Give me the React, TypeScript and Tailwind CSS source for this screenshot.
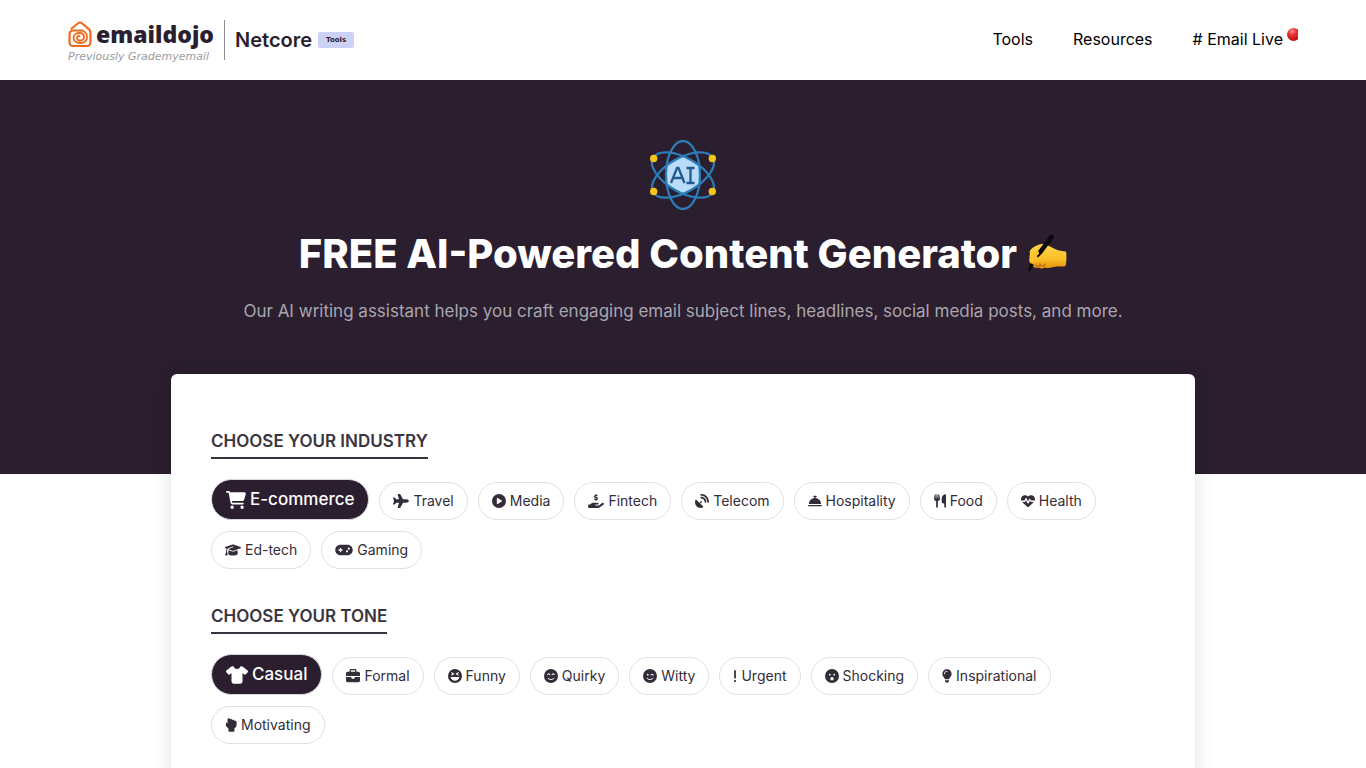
import { useState } from "react";
import type { IconType } from "react-icons";
import {
  FaBellConcierge,
  FaBriefcase,
  FaCartShopping,
  FaCirclePlay,
  FaExclamation,
  FaFaceLaughSquint,
  FaFaceSmileBeam,
  FaFaceSmileWink,
  FaFaceSurprise,
  FaGamepad,
  FaGraduationCap,
  FaHandBackFist,
  FaHandHoldingDollar,
  FaHeartPulse,
  FaLightbulb,
  FaPlane,
  FaSatelliteDish,
  FaShirt,
  FaUtensils,
} from "react-icons/fa6";

type Option = { label: string; icon: IconType; width: string; activeWidth: string };

const industries: Option[] = [
  { label: "E-commerce", icon: FaCartShopping, width: "w-4", activeWidth: "w-5" },
  { label: "Travel", icon: FaPlane, width: "w-4", activeWidth: "w-5" },
  { label: "Media", icon: FaCirclePlay, width: "w-3.5", activeWidth: "w-[18px]" },
  { label: "Fintech", icon: FaHandHoldingDollar, width: "w-4", activeWidth: "w-5" },
  { label: "Telecom", icon: FaSatelliteDish, width: "w-3.5", activeWidth: "w-[18px]" },
  { label: "Hospitality", icon: FaBellConcierge, width: "w-3.5", activeWidth: "w-[18px]" },
  { label: "Food", icon: FaUtensils, width: "w-3", activeWidth: "w-4" },
  { label: "Health", icon: FaHeartPulse, width: "w-3.5", activeWidth: "w-[18px]" },
  { label: "Ed-tech", icon: FaGraduationCap, width: "w-4", activeWidth: "w-[22px]" },
  { label: "Gaming", icon: FaGamepad, width: "w-[18px]", activeWidth: "w-[22px]" },
];

const tones: Option[] = [
  { label: "Casual", icon: FaShirt, width: "w-[18px]", activeWidth: "w-[22px]" },
  { label: "Formal", icon: FaBriefcase, width: "w-3.5", activeWidth: "w-[18px]" },
  { label: "Funny", icon: FaFaceLaughSquint, width: "w-3.5", activeWidth: "w-[18px]" },
  { label: "Quirky", icon: FaFaceSmileBeam, width: "w-3.5", activeWidth: "w-[18px]" },
  { label: "Witty", icon: FaFaceSmileWink, width: "w-3.5", activeWidth: "w-[18px]" },
  { label: "Urgent", icon: FaExclamation, width: "w-1", activeWidth: "w-1.5" },
  { label: "Shocking", icon: FaFaceSurprise, width: "w-3.5", activeWidth: "w-[18px]" },
  { label: "Inspirational", icon: FaLightbulb, width: "w-2.5", activeWidth: "w-3.5" },
  { label: "Motivating", icon: FaHandBackFist, width: "w-3", activeWidth: "w-4" },
];

function HouseMark() {
  return (
    <svg viewBox="0 0 24 27" className="h-[27px] w-6" fill="none" stroke="#f26a1b" strokeWidth="2.200" strokeLinecap="round" strokeLinejoin="round" aria-hidden="true">
      <path d="M3.500 7.500 10.500 2q1.500-1 3 0L19 6.500Q22.500 9 22.500 12V21q0 4-4 4H5.500Q1.500 25 1.500 21V13.500Q1.500 9.500 5.500 9.500h8.500" />
      <path d="M14 9.500c3.500 1 5 3.500 5 6.500 0 4-3 6-7 6s-6.500-2.500-6.500-5.500 3-4.500 6-4.500 4.500 2 4.500 4-1.500 3.500-4 3.500-3-1.300-3-2.800 1.500-2 2.700-1.500" strokeWidth="1.800" />
    </svg>
  );
}

function AtomLogo() {
  return (
    <svg viewBox="0 0 70 70" className="size-[70px]" fill="none" role="img" aria-label="AI">
      <path d="M35 16 51.500 25.500V44.500L35 54 18.500 44.500V25.500Z" fill="#b9dcfa" stroke="#8fc4ee" />
      <g stroke="#2c7cb8" strokeWidth="2.300">
        <ellipse cx="35" cy="35" rx="17" ry="34" />
        <ellipse cx="35" cy="35" rx="34.500" ry="17" transform="rotate(30 35 35)" />
        <ellipse cx="35" cy="35" rx="34.500" ry="17" transform="rotate(-30 35 35)" />
      </g>
      <path d="M23 43 29 28h1.500L36.500 43M25 38h9.500M38.500 28h8M42.500 28v15M38.500 43h8" stroke="#235a8b" strokeWidth="2.300" />
      <g fill="#f5c518">
        <circle cx="5.700" cy="18.500" r="3.700" />
        <circle cx="64.300" cy="18.500" r="3.700" />
        <circle cx="5.700" cy="51.500" r="3.700" />
        <circle cx="64.300" cy="51.500" r="3.700" />
      </g>
    </svg>
  );
}

function WritingHand() {
  return (
    <svg viewBox="0 2 40 40" className="size-10" role="img" aria-label="writing hand">
      <defs>
        <linearGradient id="skin" x1="0" y1="0" x2="0" y2="1">
          <stop offset="0" stopColor="#ffd84a" />
          <stop offset="0.600" stopColor="#fcbf28" />
          <stop offset="1" stopColor="#e2920c" />
        </linearGradient>
      </defs>
      <path d="M3 22C1.500 18 6 15 10 13.500c3-1.500 7-2 10-.5l8 4c4 2 8 2 11 2.500.8 4 .5 11-.5 14.500-3.500 1-8 0-12 1-3 1-6 1.500-8.500.5-2 1.300-4.500 1.300-6 .3-3 .5-6-.3-7.500-2.800C2 30.500 2 26 3 22Z" fill="url(#skin)" />
      <path d="M8.500 33c1.500 2.200 4.500 1.500 4.500-.5 1.500 2.200 4.500 1.500 5-.5" stroke="#b96a0a" strokeWidth="1.300" fill="none" strokeLinecap="round" />
      <path d="M22.500 3.800c1.200-2.200 5.500-.8 4.300 1.800L15.500 21 11 25.500 8 22.500 11.500 18.500Z" fill="#0b0a0d" />
      <path d="M3.500 31 7 33 2.500 39.500.8 38.500Z" fill="#0b0a0d" />
      <path d="M4.500 28.500c1.500-4 3-6 5.500-7.500" stroke="#fdc42e" strokeWidth="4" fill="none" strokeLinecap="round" />
    </svg>
  );
}

function LiveDot() {
  return (
    <svg viewBox="0 0 11 14" className="h-3.5 w-[11px]" aria-hidden="true">
      <defs>
        <radialGradient id="live" cx="0.400" cy="0.250" r="0.800">
          <stop offset="0" stopColor="#ff8a86" />
          <stop offset="0.400" stopColor="#e5322f" />
          <stop offset="1" stopColor="#b80f16" />
        </radialGradient>
      </defs>
      <circle cx="6.500" cy="7.500" r="6.500" fill="url(#live)" />
    </svg>
  );
}

function Choices({ title, options }: { title: string; options: Option[] }) {
  const [selected, setSelected] = useState(options[0].label);
  return (
    <section className="mb-[35px]">
      <h2 className="inline-block border-b-2 border-[#3a3440] pb-1 text-[17px] leading-6 font-semibold text-[#3a3440]">{title}</h2>
      <div className="mt-5 flex flex-wrap items-end gap-x-2.5 gap-y-[11px]">
        {options.map(({ label, icon: Icon, width, activeWidth }) => (
          <button
            key={label}
            type="button"
            aria-pressed={selected === label}
            onClick={() => setSelected(label)}
            className={
              selected === label
                ? "flex h-[41px] items-center gap-1 rounded-full border border-[#d9d7e2] bg-[#2a1e2f] px-3.5 text-[17px] font-medium text-white"
                : "flex h-[38px] items-center gap-1 rounded-full border border-[#e0dfe7] bg-white px-[13px] text-sm text-[#332c39]"
            }
          >
            <Icon aria-hidden="true" className={selected === label ? `h-[18px] ${activeWidth}` : `h-3.5 ${width}`} />
            {label}
          </button>
        ))}
      </div>
    </section>
  );
}

export default function App() {
  return (
    <div className="h-screen overflow-hidden bg-white font-['Inter','Liberation_Sans',sans-serif]">
      <header className="flex h-20 items-center justify-between px-[68px]">
        <a href="#" className="flex items-center text-[#2a1e2f]">
          <span className="flex flex-col gap-0.5 pt-1">
            <span className="flex h-7 items-center gap-1 font-['Open_Sans',sans-serif] text-[23px] leading-7 font-extrabold">
              <HouseMark />
              emaildojo
            </span>
            <span className="font-['DejaVu_Sans',sans-serif] text-[11px] leading-3.5 text-[#9a9a9e] italic">Previously Grademyemail</span>
          </span>
          <span className="ml-2.5 h-10 border-l border-[#8f8b93]" />
          <span className="ml-2.5 text-xl leading-6 font-semibold">Netcore</span>
          <span className="ml-1.5 flex h-4 w-9 items-center justify-center rounded-xs bg-[#cbd2f5] font-['DejaVu_Sans',sans-serif] text-[7px] font-bold">Tools</span>
        </a>
        <nav className="flex items-center gap-10 pb-0.5 text-base text-black">
          <a href="#">Tools</a>
          <a href="#">Resources</a>
          <a href="#" className="flex items-start gap-1">
            # Email Live
            <LiveDot />
          </a>
        </nav>
      </header>

      <main>
        <div className="flex h-[394px] flex-col items-center bg-[#2a1e2f] pt-[60px]">
          <AtomLogo />
          <h1 className="mt-5 flex items-center gap-2.5 text-[40px] leading-[48px] font-extrabold text-white">
            FREE AI-Powered Content Generator
            <WritingHand />
          </h1>
          <p className="mt-[19px] text-[17px] leading-7 text-[#aaa5ad]">
            Our AI writing assistant helps you craft engaging email subject lines, headlines, social media posts, and more.
          </p>
        </div>
        <div className="mx-auto -mt-[100px] max-w-[1024px] rounded-md bg-white px-10 pt-[55px] pb-10 shadow-[0_0_20px_rgba(0,0,0,0.12)]">
          <Choices title="CHOOSE YOUR INDUSTRY" options={industries} />
          <Choices title="CHOOSE YOUR TONE" options={tones} />
        </div>
      </main>
    </div>
  );
}
